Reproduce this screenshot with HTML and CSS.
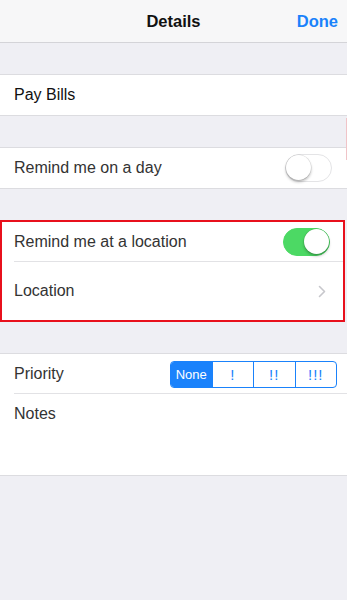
FILE: index.html
```html
<!DOCTYPE html>
<html>
<head>
<meta charset="utf-8">
<link rel="stylesheet" href="styles.css">
</head>
<body>
<div class="screen">
  <header class="nav">
    <span class="nav-title">Details</span>
    <span class="nav-done">Done</span>
  </header>

  <div class="gap"></div>
  <section class="group">
    <div class="row"><span class="label">Pay Bills</span></div>
  </section>

  <div class="gap"></div>
  <section class="group">
    <div class="row">
      <span class="label">Remind me on a day</span>
      <span class="toggle"><span class="knob"></span></span>
    </div>
  </section>

  <div class="gap gap-short"></div>
  <section class="group highlight">
    <div class="row row-sep">
      <span class="label">Remind me at a location</span>
      <span class="toggle on"><span class="knob"></span></span>
    </div>
    <div class="row row-tall">
      <span class="label">Location</span>
      <svg class="chevron" width="8" height="13" viewBox="0 0 8 13"><path d="M1.5 1.5 L6.5 6.5 L1.5 11.5" fill="none" stroke="#c7c7cc" stroke-width="1.6" stroke-linecap="round" stroke-linejoin="round"/></svg>
    </div>
  </section>

  <div class="gap"></div>
  <section class="group">
    <div class="row row-sep">
      <span class="label">Priority</span>
      <div class="segmented">
        <span class="seg active">None</span>
        <span class="seg mark">!</span>
        <span class="seg mark">!!</span>
        <span class="seg mark">!!!</span>
      </div>
    </div>
    <div class="row row-notes">
      <span class="label">Notes</span>
    </div>
  </section>
  <div class="edge-mark"></div>
</div>
</body>
</html>
```

FILE: styles.css
```css
* { box-sizing: border-box; }
html, body { margin: 0; padding: 0; }
body {
  background: #efeff4;
  font-family: "Liberation Sans", Arial, sans-serif;
  color: #333;
}
.screen {
  position: relative;
  width: 347px;
  min-height: 600px;
  background: #efeff4;
}
.nav {
  height: 43px;
  background: #f7f7f8;
  border-bottom: 1px solid #d4d4d8;
  position: relative;
  display: flex;
  align-items: center;
  justify-content: center;
}
.nav-title {
  font-size: 16.5px;
  font-weight: bold;
  color: #111;
}
.nav-done {
  position: absolute;
  right: 9px;
  top: 12px;
  font-size: 16.5px;
  font-weight: bold;
  color: #1a82fb;
}
.gap { height: 31px; }
.gap-short { height: 31px; }
.group {
  background: #fff;
  border-top: 1px solid #dcdce0;
  border-bottom: 1px solid #dcdce0;
}
.row {
  height: 40px;
  display: flex;
  align-items: center;
  justify-content: space-between;
  padding: 0 15px 0 14px;
  position: relative;
}
.row-sep::after {
  content: "";
  position: absolute;
  left: 14px;
  right: 0;
  bottom: 0;
  height: 1px;
  background: #e2e2e5;
}
.label {
  font-size: 16px;
  color: #333;
}
.group:first-of-type .label { color: #111; }
.row-tall { height: 58px; padding-right: 18px; }
.highlight {
  border: 2px solid #e8101c;
  width: 345px;
}
.highlight .row { padding-left: 12px; padding-right: 13px; }
.highlight .row-sep::after { left: 12px; }
.highlight .row-tall { padding-right: 17px; }
.toggle {
  width: 47px;
  height: 28px;
  border-radius: 14px;
  background: #fff;
  border: 1.5px solid #e4e4e6;
  position: relative;
  display: block;
}
.toggle .knob {
  position: absolute;
  top: 0;
  left: 0;
  width: 25px;
  height: 25px;
  border-radius: 50%;
  background: #fff;
  box-shadow: 0 2px 3px rgba(0,0,0,0.28), 0 0 0 0.5px rgba(0,0,0,0.12);
}
.toggle.on {
  background: #4cd964;
  border-color: #4cd964;
}
.toggle.on .knob {
  left: auto;
  right: 0;
}
.segmented {
  display: flex;
  width: 167px;
  height: 27px;
  border: 1px solid #1a82fb;
  border-radius: 4px;
  overflow: hidden;
  margin-right: -5px;
}
.seg {
  flex: 1;
  display: flex;
  align-items: center;
  justify-content: center;
  font-size: 13px;
  color: #1a82fb;
  border-left: 1px solid #1a82fb;
}
.seg.mark {
  font-size: 15px;
  letter-spacing: 1px;
}
.seg:first-child { border-left: none; }
.seg.active {
  background: #1a82fb;
  color: #fff;
}
.row-notes {
  height: 81px;
  align-items: flex-start;
  padding-top: 11px;
}
.edge-mark {
  position: absolute;
  right: 0;
  top: 118px;
  width: 1px;
  height: 42px;
  background: #f0c4c8;
}
```
